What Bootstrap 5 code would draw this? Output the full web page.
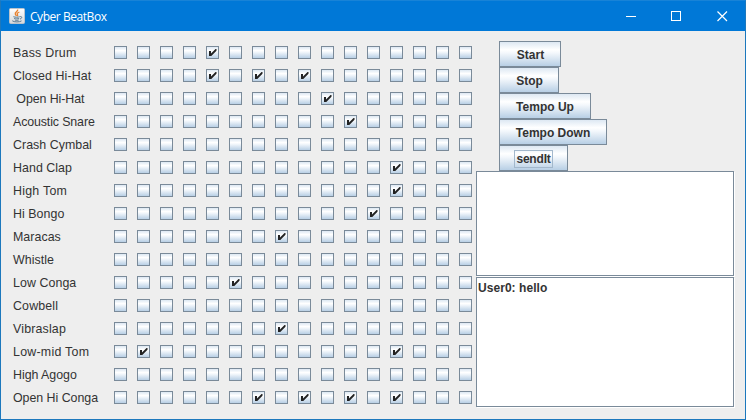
<!DOCTYPE html>
<html lang="en">
<head>
<meta charset="utf-8">
<title>Cyber BeatBox</title>
<link rel="stylesheet" href="https://cdn.jsdelivr.net/npm/bootstrap@5.3.0/dist/css/bootstrap.min.css">
<style>
body{width:746px;height:420px;overflow:hidden;font-family:"Liberation Sans",Arial,sans-serif;font-size:12px;line-height:15px;color:#333}
.window{width:746px;height:420px;background:#eee;border:1px solid #1c78bd;border-top-color:#1883d7}
.titlebar{height:30px;background:#0078d7;color:#fff;padding-left:8px;font-family:"Open Sans","Noto Sans",sans-serif;font-size:12px}
.caption-btn{width:46px;height:29px}
.caption-title{margin-left:5px;letter-spacing:-.45px}
.rows{width:471px;padding:10px 0 0 12px}
.track{height:23px}
.track-name{width:101px;flex:none;white-space:pre;font-size:12.4px;padding-top:2px}
.beats{gap:10px}
.beat{width:13px;height:13px;border:1px solid #7a8a99;background:linear-gradient(#dde8f3 0%,#fff 32%,#f4f8fc 45%,#b8cfe5 100%)}
.beat svg{display:block}
.side{width:258px;margin-left:4px;padding-top:10px}
.actions{padding-left:23px}
.metal{height:26px;padding:2px 0 0;border:1px solid #7a8a99;border-radius:0;background:linear-gradient(#dde8f3 0%,#fff 32%,#f4f8fc 45%,#b8cfe5 100%);font-size:12px;line-height:15px;font-weight:700;color:#333}
.focused{border:1px solid #a3b8cc;padding:1px 1px;line-height:15px;letter-spacing:-.2px}
.w-start{width:62px;padding-left:1px}.w-stop{width:60px;padding-left:1px}.w-up{width:92px}.w-down{width:108px}.w-send{width:69px}
.pane{width:258px;background:#fff;border:1px solid #7a8a99;box-shadow:1px 1px #fff;font-weight:700;padding:3px 1px;letter-spacing:.05px}
.incoming{height:105px}
.outgoing{height:130px;margin-top:1px}
</style>
</head>
<body>
<div class="window d-flex flex-column">
  <header class="titlebar d-flex align-items-center flex-shrink-0">
    <svg width="16" height="16" viewBox="0 0 16 16">
      <defs><linearGradient id="tile" x2="0" y2="1"><stop stop-color="#fff"/><stop offset="1" stop-color="#d5d8db"/></linearGradient></defs>
      <rect x=".5" y=".5" width="15" height="15" rx="1" fill="url(#tile)" stroke="#b9c3cc"/>
      <path d="M8.600 1.500c1 1.900-3.300 2.700-2.300 4.600.3.700 1 1.100 1 1.900M10.400 4c-2 .8-2.800 1.600-1.900 2.600.4.6.2 1.100-.3 1.500" fill="none" stroke="#e8812d" stroke-width="1.300"/>
      <path d="M4.400 8.700c1.700.7 4.900.6 6.300 0M5.200 10.400c1.400.7 3.800.6 5 0M5.800 12c1.200.5 2.900.5 3.900 0M11.200 8.600c2.100-.5 2 1.800-.2 2.500M3.300 12.800c1.700 1.500 7.500 1.400 9.200.1" fill="none" stroke="#587990" stroke-width="1"/>
    </svg>
    <span class="caption-title me-auto">Cyber BeatBox</span>
    <div class="caption-btn"><svg width="46" height="29"><path d="M19 14.500h10" stroke="#fff"/></svg></div>
    <div class="caption-btn"><svg width="46" height="29"><rect x="18.500" y="9.500" width="9" height="9" fill="none" stroke="#fff"/></svg></div>
    <div class="caption-btn"><svg width="46" height="29"><path d="M18.500 9.500l9.500 9.500M28 9.500l-9.500 9.500" stroke="#fff" stroke-width="1.200"/></svg></div>
  </header>
  <main class="d-flex flex-grow-1">
    <section class="rows" id="rows"></section>
    <section class="side">
      <div class="actions d-flex flex-column align-items-start">
        <button class="btn metal w-start">Start</button>
        <button class="btn metal w-stop">Stop</button>
        <button class="btn metal w-up">Tempo Up</button>
        <button class="btn metal w-down">Tempo Down</button>
        <button class="btn metal w-send"><span class="focused">sendIt</span></button>
      </div>
      <div class="pane incoming"></div>
      <div class="pane outgoing">User0: hello</div>
    </section>
  </main>
</div>
<script src="https://cdn.jsdelivr.net/npm/bootstrap@5.3.0/dist/js/bootstrap.bundle.min.js"></script>
<script>
// name, active beats, letter spacing of the label
const tracks = [
  ["Bass Drum", [4], .25], ["Closed Hi-Hat", [4, 6, 8], .08], [" Open Hi-Hat", [9], -.08], ["Acoustic Snare", [10], -.12],
  ["Crash Cymbal", [], .03], ["Hand Clap", [12], .05], ["High Tom", [12], .25], ["Hi Bongo", [11], .05],
  ["Maracas", [7], .05], ["Whistle", [], .05], ["Low Conga", [5], .07], ["Cowbell", [], .15],
  ["Vibraslap", [7], .17], ["Low-mid Tom", [1, 12], .25], ["High Agogo", [], -.03], ["Open Hi Conga", [6, 8, 10, 12], -.03]
];
const tick = '<svg width="11" height="11"><path d="M2 4h2v2.500L8.500 2H9.500v1.800L4.300 9H2z" fill="#222"/></svg>';
document.getElementById("rows").innerHTML = tracks.map(([name, on, gap]) =>
  `<div class="track d-flex align-items-center"><span class="track-name" style="letter-spacing:${gap}px">${name}</span><div class="beats d-flex">${
    Array.from({length: 16}, (_, i) => `<span class="beat">${on.includes(i) ? tick : ""}</span>`).join("")
  }</div></div>`).join("");
</script>
</body>
</html>
